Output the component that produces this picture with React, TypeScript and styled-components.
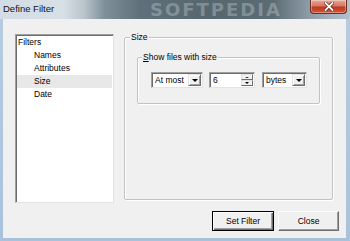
import React from 'react'
import styled, { createGlobalStyle } from 'styled-components'

const GlobalStyle = createGlobalStyle`
  html, body { margin: 0; padding: 0; background: #fff; }
  body { font-family: "Liberation Sans", Arial, sans-serif; color: #000; }
`

const Window = styled.div`
  width: 350px;
  height: 241px;
  display: flex;
  flex-direction: column;
  background: linear-gradient(#b7cce0, #a9c2dc);
  overflow: hidden;
`

const TitleBar = styled.div`
  position: relative;
  height: 19px;
  flex: none;
  display: flex;
  align-items: flex-start;
  overflow: hidden;
  background: linear-gradient(
    to right,
    #d3dce4 0%,
    #d8e0e7 18%,
    #b9c4cc 24%,
    #7e8f99 30%,
    #5f707a 40%,
    #56666f 60%,
    #5c6c75 78%,
    #8c9ba5 88%,
    #b3c2ce 100%
  );
`

const Title = styled.div`
  position: relative;
  z-index: 1;
  padding: 3px 0 0 3px;
  font-size: 9.5px;
  line-height: 11px;
  color: #111;
`

const Watermark = styled.div`
  position: absolute;
  left: 150px;
  top: 0;
  font-family: "DejaVu Sans", sans-serif;
  font-weight: bold;
  font-size: 18px;
  line-height: 19px;
  letter-spacing: 2px;
  color: rgba(255, 255, 255, 0.26);
  white-space: nowrap;
`

const CloseBox = styled.div`
  position: relative;
  z-index: 1;
  margin-left: auto;
  margin-right: 3px;
  width: 37px;
  height: 14px;
  box-sizing: border-box;
  border: 1px solid #6b2c22;
  border-top: none;
  border-radius: 0 0 4px 4px;
  background: linear-gradient(#e7a898 0%, #d77762 45%, #c2371f 55%, #d2553b 100%);
  box-shadow: inset 0 0 0 1px rgba(255, 255, 255, 0.35);
  display: flex;
  align-items: center;
  justify-content: center;
`

const Client = styled.div`
  flex: 1;
  margin: 0 4px 3px 3px;
  background: #f0f0f0;
  padding: 15px 7px 7px 12px;
  display: flex;
  flex-direction: column;
`

const TopRow = styled.div`
  display: flex;
  align-items: flex-start;
  gap: 10px;
  height: 169px;
`

const ListBox = styled.div`
  width: 99px;
  height: 169px;
  box-sizing: border-box;
  background: #fff;
  border: 1px solid;
  border-color: #a0a0a0 #e3e3e3 #e3e3e3 #a0a0a0;
  box-shadow: inset 1px 1px #6d6d6d;
  padding: 1px 1px 0 1px;
`

const ListItem = styled.div<{ $indent: number; $selected?: boolean }>`
  height: 13px;
  line-height: 13px;
  font-size: 8.5px;
  padding-left: ${p => p.$indent}px;
  background: ${p => (p.$selected ? '#e8e8e8' : 'transparent')};
  white-space: nowrap;
`

const Group = styled.fieldset<{ $w?: number; $h: number; $mt: number }>`
  margin: ${p => p.$mt}px 0 0 0;
  padding: 0;
  min-inline-size: 0;
  box-sizing: border-box;
  width: ${p => (p.$w ? `${p.$w}px` : 'auto')};
  height: ${p => p.$h}px;
  border: 1px solid #c2c2c2;
  border-radius: 2px;
  box-shadow: inset 1px 1px #fff, 1px 1px #fff;
`

const Legend = styled.legend<{ $ml: number }>`
  margin-left: ${p => p.$ml}px;
  padding: 0 1px;
  font-size: 8.5px;
  line-height: 10px;
  background: #f0f0f0;
`

const GroupBody = styled.div`
  margin: 10px 12px 0 12px;
`

const ControlRow = styled.div`
  display: flex;
  margin: 10px 0 0 13px;
`

const Field = styled.div<{ $w: number; $mr?: number }>`
  width: ${p => p.$w}px;
  margin-right: ${p => p.$mr ?? 0}px;
  height: 16px;
  box-sizing: border-box;
  background: #fff;
  border: 1px solid;
  border-color: #a0a0a0 #e3e3e3 #e3e3e3 #a0a0a0;
  box-shadow: inset 1px 1px #6d6d6d;
  display: flex;
  align-items: stretch;
  padding: 1px;
`

const FieldText = styled.span`
  flex: 1;
  padding-left: 2px;
  font-size: 8.5px;
  line-height: 12px;
  white-space: nowrap;
  overflow: hidden;
`

const DropButton = styled.div`
  width: 13px;
  flex: none;
  box-sizing: border-box;
  background: #f0f0f0;
  border: 1px solid;
  border-color: #e3e3e3 #6d6d6d #6d6d6d #e3e3e3;
  box-shadow: inset 1px 1px #fff, inset -1px -1px #a0a0a0;
  display: flex;
  align-items: center;
  justify-content: center;
`

const Arrow = styled.span<{ $up?: boolean; $size?: number }>`
  width: 0;
  height: 0;
  border-left: ${p => p.$size ?? 3}px solid transparent;
  border-right: ${p => p.$size ?? 3}px solid transparent;
  ${p =>
    p.$up
      ? `border-bottom: ${(p.$size ?? 3) - 1 || 1}px solid #000;`
      : `border-top: ${p.$size ?? 3}px solid #000;`}
`

const Spinner = styled.div`
  width: 12px;
  flex: none;
  display: flex;
  flex-direction: column;
`

const SpinButton = styled.div`
  flex: 1;
  box-sizing: border-box;
  background: #f0f0f0;
  border: 1px solid;
  border-color: #e3e3e3 #6d6d6d #6d6d6d #e3e3e3;
  display: flex;
  align-items: center;
  justify-content: center;
`

const ButtonRow = styled.div`
  display: flex;
  justify-content: flex-end;
  gap: 4px;
  margin-top: 8px;
`

const Button = styled.button<{ $w: number; $default?: boolean }>`
  width: ${p => p.$w}px;
  height: 20px;
  padding: 0;
  font-family: "Liberation Sans", Arial, sans-serif;
  font-size: 8.5px;
  color: #000;
  background: #f0f0f0;
  box-sizing: border-box;
  border: 1px solid;
  ${p =>
    p.$default
      ? `border-color: #000;
         box-shadow: inset 1px 1px #fff, inset -1px -1px #6d6d6d, inset -2px -2px #a0a0a0;`
      : `border-color: #fff #6d6d6d #6d6d6d #fff;
         box-shadow: inset -1px -1px #a0a0a0;`}
`

const filters = [
  { label: 'Filters', indent: 1 },
  { label: 'Names', indent: 17 },
  { label: 'Attributes', indent: 17 },
  { label: 'Size', indent: 17, selected: true },
  { label: 'Date', indent: 17 }
]

export default function App() {
  return (
    <>
      <GlobalStyle />
      <Window>
        <TitleBar>
          <Watermark>SOFTPEDIA</Watermark>
          <Title>Define Filter</Title>
          <CloseBox>
            <svg width="10" height="9" viewBox="0 0 10 9">
              <path d="M1.5 1 L8.5 8 M8.5 1 L1.5 8" stroke="#5a1a10" strokeWidth="3.2" strokeLinecap="square" />
              <path d="M1.5 1 L8.5 8 M8.5 1 L1.5 8" stroke="#fff" strokeWidth="1.8" strokeLinecap="square" />
            </svg>
          </CloseBox>
        </TitleBar>
        <Client>
          <TopRow>
            <ListBox>
              {filters.map(f => (
                <ListItem key={f.label} $indent={f.indent} $selected={f.selected}>
                  {f.label}
                </ListItem>
              ))}
            </ListBox>
            <Group $w={209} $h={168} $mt={-2}>
              <Legend $ml={5}>Size</Legend>
              <GroupBody>
                <Group $h={52} $mt={10}>
                  <Legend $ml={4}>
                    <u>S</u>how files with size
                  </Legend>
                  <ControlRow>
                    <Field $w={52} $mr={6}>
                      <FieldText>At most</FieldText>
                      <DropButton>
                        <Arrow />
                      </DropButton>
                    </Field>
                    <Field $w={46} $mr={7}>
                      <FieldText>6</FieldText>
                      <Spinner>
                        <SpinButton>
                          <Arrow $up $size={2} />
                        </SpinButton>
                        <SpinButton>
                          <Arrow $size={2} />
                        </SpinButton>
                      </Spinner>
                    </Field>
                    <Field $w={45}>
                      <FieldText>bytes</FieldText>
                      <DropButton>
                        <Arrow />
                      </DropButton>
                    </Field>
                  </ControlRow>
                </Group>
              </GroupBody>
            </Group>
          </TopRow>
          <ButtonRow>
            <Button $w={62} $default>
              Set Filter
            </Button>
            <Button $w={61}>Close</Button>
          </ButtonRow>
        </Client>
      </Window>
    </>
  )
}
